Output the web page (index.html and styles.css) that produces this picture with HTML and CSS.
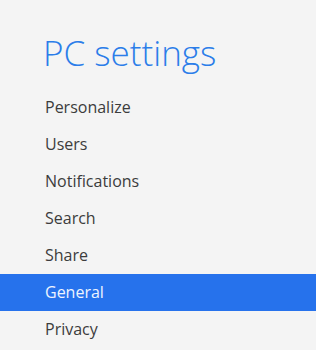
FILE: index.html
```html
<!DOCTYPE html>
<html lang="en">
<head>
  <meta charset="UTF-8" />
  <meta name="viewport" content="width=device-width, initial-scale=1.0"/>
  <title>PC settings</title>
  <link rel="stylesheet" href="styles.css">
</head>
<body>

  <h1 class="title">PC settings</h1>

  <ul class="menu">
    <li>Personalize</li>
    <li>Users</li>
    <li>Notifications</li>
    <li>Search</li>
    <li>Share</li>
    <li class="active">General</li>
    <li>Privacy</li>
  </ul>

</body>
</html>
```

FILE: styles.css
```css
body {
  margin: 0;
  background: #f4f4f4;
  font-family: "Open Sans", "Noto Sans", sans-serif;
}

.title {
  margin: 0;
  padding: 33px 0 0 43px;
  font-size: 35px;
  font-weight: 300;
  line-height: 40px;
  color: #2b7de9;
}

.menu {
  list-style: none;
  margin: 16px 0 0;
  padding: 0;
}

.menu li {
  height: 37px;
  line-height: 37px;
  padding-left: 45px;
  font-size: 16px;
  color: #3c3c3c;
}

.menu li.active {
  background: #2672ec;
  color: #eef4ff;
}
```
